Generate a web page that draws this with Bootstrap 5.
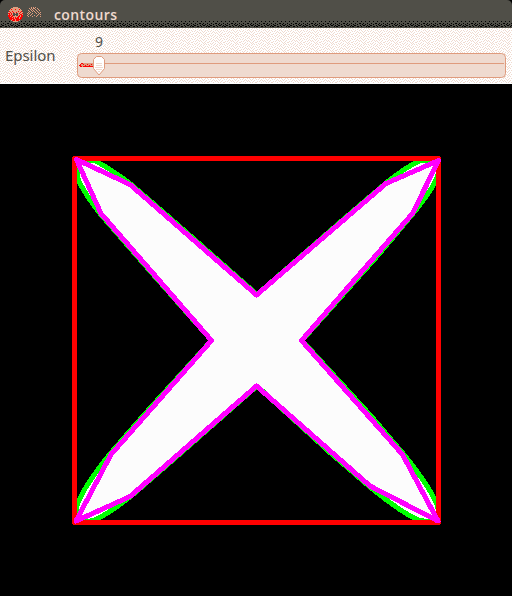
<!DOCTYPE html>
<html lang="en">
<head>
<meta charset="utf-8">
<meta name="viewport" content="width=device-width, initial-scale=1">
<title>contours</title>
<link rel="stylesheet" href="https://cdn.jsdelivr.net/npm/bootstrap@5.3.0/dist/css/bootstrap.min.css">
<style>
body{width:512px;height:596px;overflow:hidden;background:#000;font-family:"Noto Sans","Open Sans",sans-serif}
.titlebar{height:28px;background:#504f48;border-radius:5px 5px 0 0;color:#efdacf}
.titlebar .grain{left:0;top:0}
.caption{font-size:14px;font-weight:600;line-height:28px;letter-spacing:.4px;margin-left:10px;padding-top:1px;font-family:"Open Sans","Noto Sans",sans-serif}
.controls{height:56px;color:#504f48}
.controls .grain{left:0;top:0}
.eps-label{width:77px;padding-left:5px;font-size:15px;line-height:54px;letter-spacing:-.05px}
.eps-value{font-size:14px;line-height:20px;height:25px;padding:4px 0 0 18px}
.scene{height:512px}
</style>
<script src="https://cdn.jsdelivr.net/npm/bootstrap@5.3.0/dist/js/bootstrap.bundle.min.js"></script>
</head>
<body class="m-0 d-flex flex-column">
<header class="titlebar position-relative d-flex overflow-hidden flex-shrink-0">
  <svg class="grain position-absolute" width="512" height="28" shape-rendering="crispEdges" aria-hidden="true">
    <defs><pattern id="dark" width="16" height="7" y="21" patternUnits="userSpaceOnUse">
      <path stroke="#000" d="M1 .5h1M5 .5h1M9 .5h1M13 .5h1M3 2.5h1M7 2.5h2M11 2.5h1M15 2.5h1M1 3.5h1M5 3.5h1M10 3.5h1M13 3.5h1M2 4.5h2M8 4.500h1M11 4.5h2M15 4.5h1M0 5.5h2M5 5.5h2M9 5.5h1M14 5.5h1"/>
    </pattern></defs>
    <rect y="21" width="512" height="7" fill="url(#dark)"/>
  </svg>
  <svg class="position-relative flex-shrink-0" width="44" height="28" shape-rendering="crispEdges" aria-label="Window buttons">
    <circle cx="15.5" cy="14.5" r="7.500" fill="#df9b7d"/>
    <path stroke="#f00" d="M11 9.500h1M15 9.500h1M19 9.500h1M9 11.500h1M12 11.500h1M18 11.500h1M21 11.500h1M10 12.500h1M13 12.500h1M16 12.500h1M20 12.500h1M8 13.500h2M11 13.500h1M19 13.500h1M22 13.500h1M9 14.500h1M11 14.500h1M20 14.500h2M8 15.500h3M12 15.500h1M19 15.500h1M21 15.500h2M8 16.500h2M11 16.500h2M18 16.500h2M21 16.500h2M9 17.500h3M13 17.500h1M15 17.500h1M17 17.500h2M20 17.500h2M9 18.500h5M15 18.500h4M20 18.500h2M10 19.500h2M13 19.500h2M16 19.500h5M12 20.500h3M16 20.500h3"/>
    <path fill="#504f48" d="M13 13h2v1h1v-1h2v3h-2v-1h-1v1h-2z"/>
    <path stroke="#df9b7d" d="M31 7.500h1M33 7.500h1M35 7.500h1M29 8.500h1M31 8.500h1M33 8.500h2M37 8.500h1M30 9.500h1M32 9.500h1M35 9.500h1M38 9.500h1M28 10.500h1M31 10.500h1M33 10.500h1M36 10.500h1M39 10.500h1M29 11.500h1M32 11.500h1M34 11.500h1M37 11.500h1M28 12.500h1M30 12.500h1M35 12.500h1M38 12.500h1M40 12.500h1M27 13.500h1M29 13.500h1M32 13.500h1M36 13.500h1M39 13.500h1M28 14.500h1M31 14.500h1M38 14.500h1M40 14.500h1M27 15.500h1M30 15.500h1M34 15.500h1M37 15.500h1M28 16.500h1M32 16.500h1M36 16.500h1M40 16.500h1"/>
  </svg>
  <div class="caption position-relative">contours</div>
</header>
<main>
  <section class="controls position-relative d-flex">
    <svg class="grain position-absolute" width="512" height="56" shape-rendering="crispEdges" aria-hidden="true">
      <defs><pattern id="light" width="16" height="8" patternUnits="userSpaceOnUse">
        <path stroke="#efdacf" d="M0 .5h1M3 .5h1M6 .5h1M9 .5h1M12 .5h1M14 .5h1M1 1.5h1M5 1.5h1M8 1.5h1M11 1.5h1M3 2.5h1M7 2.5h1M9 2.5h1M13 2.5h1M15 2.5h1M0 3.5h1M2 3.5h1M5 3.5h1M10 3.5h1M12 3.5h1M4 4.5h1M6 4.5h1M8 4.5h1M11 4.5h1M14 4.5h1M1 5.5h1M3 5.5h1M7 5.5h1M9 5.5h1M13 5.5h1M0 6.5h1M5 6.5h1M10 6.5h1M12 6.5h1M15 6.5h1M2 7.5h1M4 7.5h1M7 7.5h1M11 7.5h1M13 7.5h1"/>
      </pattern></defs>
      <rect width="512" height="56" fill="#fff"/><rect width="512" height="55" fill="url(#light)"/>
    </svg>
    <label class="eps-label position-relative flex-shrink-0">Epsilon</label>
    <div class="position-relative flex-grow-1">
      <div class="eps-value">9</div>
      <svg class="d-block" width="430" height="26" viewBox="77 53 430 26" role="img" aria-label="Epsilon slider at 9">
        <rect x="77.5" y="53.5" width="428" height="24" rx="4" fill="#efdacf" stroke="#df9b7d"/>
        <path stroke="#df9b7d" d="M94 63.500H504"/>
        <g shape-rendering="crispEdges">
          <path d="M79 65h1v-1h1v-1h13v4H81v-1h-2z" fill="#df9b7d"/>
          <path stroke="#f00" d="M79 65.500h2M80 64.500h1M80 66.500h2M83 66.500h10M81 63.500h2M83 64.500h1M85 65.500h1M87 64.500h1M89 65.500h1M91 64.500h1"/>
        </g>
        <path d="M96.500 56.500h5l3 3v9l-5.500 6.500-5.500-6.500v-9z" fill="#fff" stroke="#df9b7d"/>
        <path stroke="#efdacf" shape-rendering="crispEdges" d="M96 63.500h6M96 65.500h6M95 67.500h8M96 69.500h6M98 71.500h2"/>
      </svg>
    </div>
  </section>
  <svg class="scene d-block w-100" viewBox="0 84 512 512" shape-rendering="crispEdges" role="img" aria-label="Contours of a cross shape">
    <rect y="84" width="512" height="512"/>
    <path fill="#fcfcfc" stroke="#0f0" stroke-width="5" stroke-linejoin="round" d="M77 160H91Q98 160 130 183.500L170 218 257 294.500 345 218 386 183Q414 161 424 160H438.500V172Q437 184 413 213.500L380 253 302 340.500 371 416 403 453.500Q439 498 438.500 513V521H424Q412 521 370 487L330 452.500 257 386 170 462.500 130 497Q100 520 90 521H76V510Q78 494 110 454L143 416 211.500 340.500 143 263 100 213.500Q79 186 77 175Z"/>
    <rect x="74.500" y="158.500" width="364" height="364" fill="none" stroke="#f00" stroke-width="5" stroke-linejoin="round"/>
    <path fill="none" stroke="#f0f" stroke-width="5" stroke-linejoin="round" d="M76.500 159.500 130 184.500 256.500 295 386 183.500 438.500 160.500 412.500 213.500 301.500 340.500 402.500 454.500 438 521 370 486 256.500 386 130 496.500 76 521 111 454.500 211.500 340.500 101 213.500Z"/>
  </svg>
</main>
</body>
</html>
